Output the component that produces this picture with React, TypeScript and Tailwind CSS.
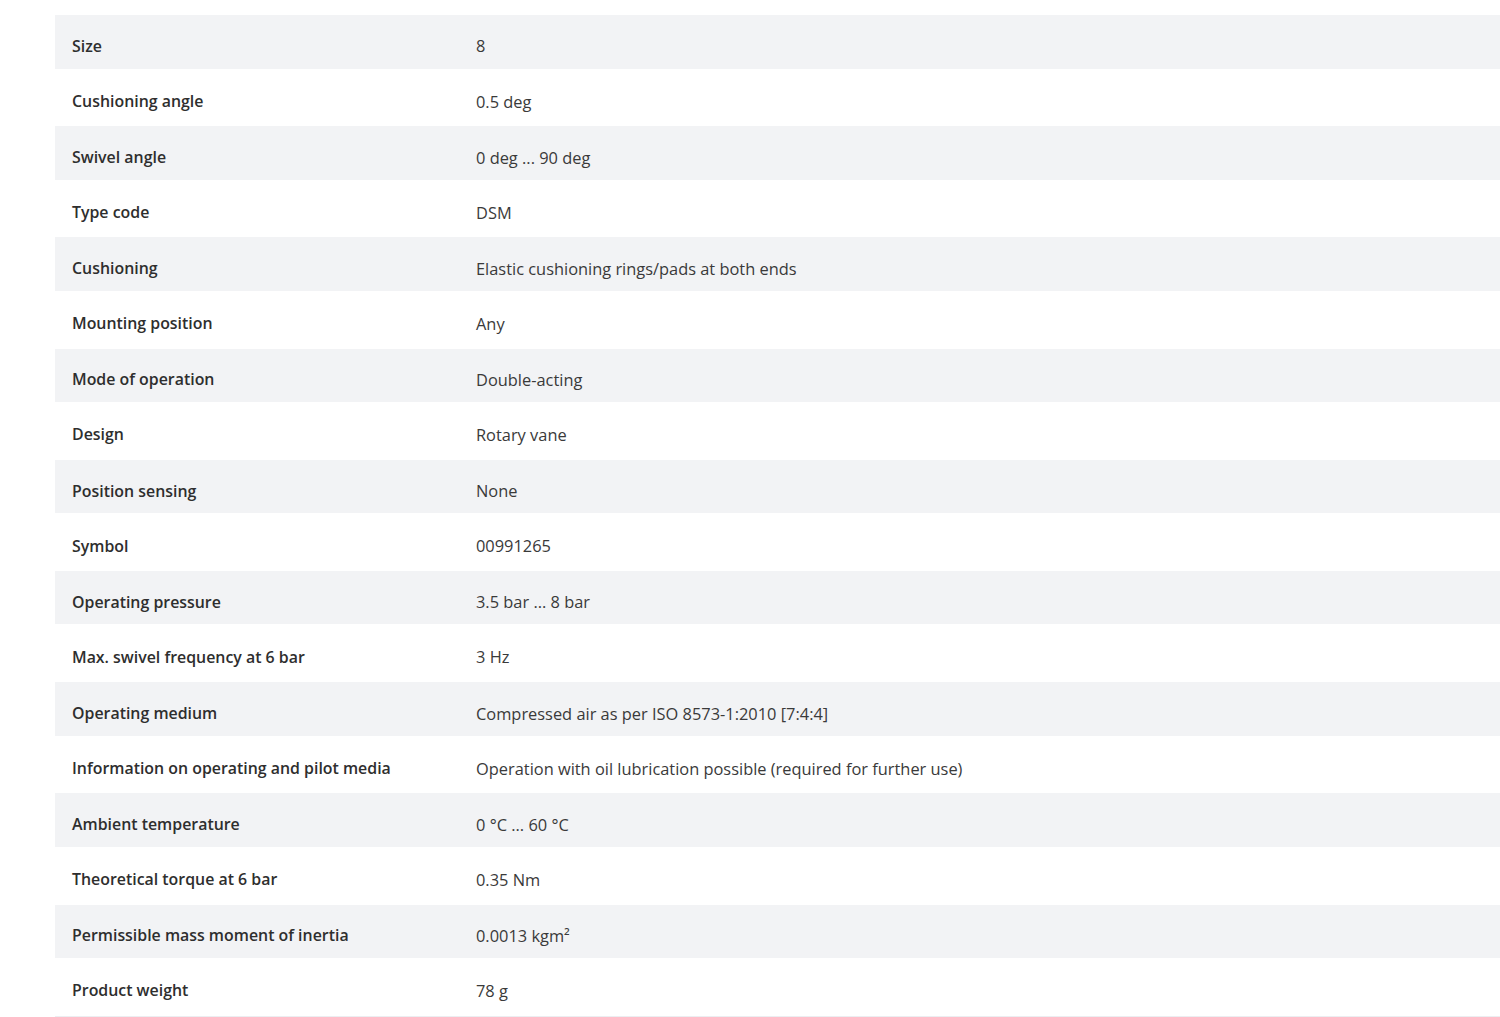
const rows: [string, string][] = [
  ["Size", "8"],
  ["Cushioning angle", "0.5 deg"],
  ["Swivel angle", "0 deg ... 90 deg"],
  ["Type code", "DSM"],
  ["Cushioning", "Elastic cushioning rings/pads at both ends"],
  ["Mounting position", "Any"],
  ["Mode of operation", "Double-acting"],
  ["Design", "Rotary vane"],
  ["Position sensing", "None"],
  ["Symbol", "00991265"],
  ["Operating pressure", "3.5 bar ... 8 bar"],
  ["Max. swivel frequency at 6 bar", "3 Hz"],
  ["Operating medium", "Compressed air as per ISO 8573-1:2010 [7:4:4]"],
  ["Information on operating and pilot media", "Operation with oil lubrication possible (required for further use)"],
  ["Ambient temperature", "0 °C ... 60 °C"],
  ["Theoretical torque at 6 bar", "0.35 Nm"],
  ["Permissible mass moment of inertia", "0.0013 kgm²"],
  ["Product weight", "78 g"],
];

export default function App() {
  return (
    <div className="min-h-[1017px] bg-white pl-[55px] pt-[15px] font-['Open_Sans',sans-serif] text-[#333]">
      <div className="border-b border-[#eceef1]">
        {rows.map(([label, value], i) => (
          <div
            key={i}
            className={`grid grid-cols-[421px_1fr] items-center ${
              i % 2 === 0 ? "h-[53.5px] bg-[#f2f3f5] pt-[10px]" : "h-[57.7px] bg-white pt-[9px]"
            }`}
          >
            <div className="pl-[17px] text-[15.9px] font-semibold text-[#2e2e2e]">{label}</div>
            <div className="text-[16.4px] text-[#3a3a3a]">{value}</div>
          </div>
        ))}
      </div>
    </div>
  );
}
